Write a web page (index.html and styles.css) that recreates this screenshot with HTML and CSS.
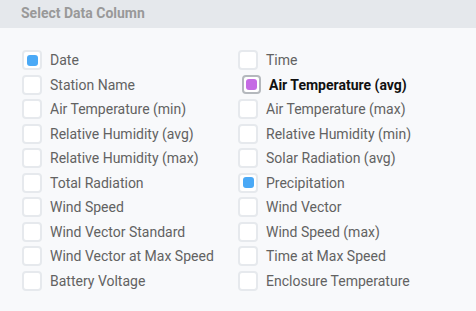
FILE: index.html
```html
<!DOCTYPE html>
<html>
  <head>
    <meta charset="utf-8" />
    <title>Select Data Column</title>
    <link rel="stylesheet" href="styles.css">
  </head>
  <body>
    <div class="panel">
      <div class="panel-header">Select Data Column</div>
      <div class="columns">
        <label class="option"><span class="box"><span class="dot blue"></span></span>Date</label>
        <label class="option"><span class="box"></span>Time</label>
        <label class="option"><span class="box"></span>Station Name</label>
        <label class="option active"><span class="box"><span class="dot purple"></span></span>Air Temperature (avg)</label>
        <label class="option"><span class="box"></span>Air Temperature (min)</label>
        <label class="option"><span class="box"></span>Air Temperature (max)</label>
        <label class="option"><span class="box"></span>Relative Humidity (avg)</label>
        <label class="option"><span class="box"></span>Relative Humidity (min)</label>
        <label class="option"><span class="box"></span>Relative Humidity (max)</label>
        <label class="option"><span class="box"></span>Solar Radiation (avg)</label>
        <label class="option"><span class="box"></span>Total Radiation</label>
        <label class="option"><span class="box"><span class="dot blue"></span></span>Precipitation</label>
        <label class="option"><span class="box"></span>Wind Speed</label>
        <label class="option"><span class="box"></span>Wind Vector</label>
        <label class="option"><span class="box"></span>Wind Vector Standard</label>
        <label class="option"><span class="box"></span>Wind Speed (max)</label>
        <label class="option"><span class="box"></span>Wind Vector at Max Speed</label>
        <label class="option"><span class="box"></span>Time at Max Speed</label>
        <label class="option"><span class="box"></span>Battery Voltage</label>
        <label class="option"><span class="box"></span>Enclosure Temperature</label>
      </div>
    </div>
  </body>
</html>
```

FILE: styles.css
```css
body {
  margin: 0;
  font-family: Roboto, "Liberation Sans", sans-serif;
  background: #f8f9fb;
}

.panel {
  width: 476px;
  height: 311px;
  background: #f8f9fb;
}

.panel-header {
  height: 28px;
  box-sizing: border-box;
  padding: 5px 0 0 21px;
  background: #e5e8ec;
  color: #999;
  font-size: 14px;
  font-weight: bold;
}

.columns {
  display: grid;
  grid-template-columns: 216px 216px;
  grid-auto-rows: 24.5px;
  padding: 20px 0 0 22px;
}

.option {
  display: flex;
  align-items: center;
  gap: 8px;
  color: #626262;
  font-size: 14px;
  white-space: nowrap;
}

.box {
  display: flex;
  align-items: center;
  justify-content: center;
  width: 20px;
  height: 20px;
  box-sizing: border-box;
  border: 2px solid #e6e9ed;
  border-radius: 4px;
  background: #fff;
}

.dot {
  width: 11px;
  height: 11px;
  border-radius: 3px;
}

.blue {
  background: #4aa9f6;
}

.purple {
  background: #c56be4;
}

.active {
  color: #111;
  font-weight: bold;
}

.active .box {
  margin-left: 4px;
  width: 19px;
  height: 19px;
  border-color: #b4b8bd;
}
```
